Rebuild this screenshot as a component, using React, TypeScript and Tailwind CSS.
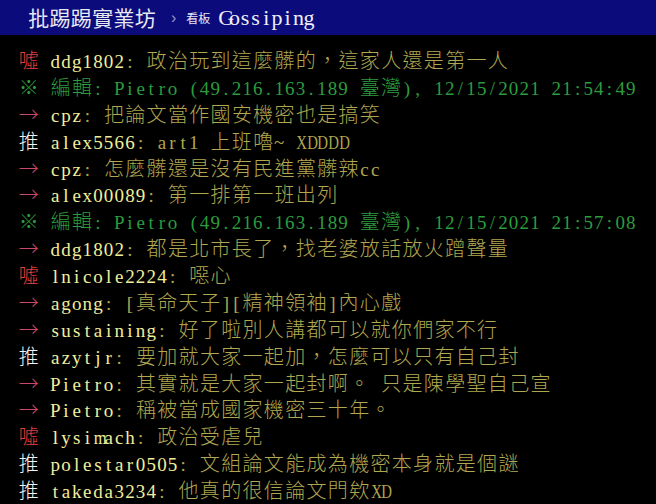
import React from 'react';

type Seg = { text: string; color: string };

const C = {
  boo: 'text-[#e0403f]',
  push: 'text-[#f2f2f2]',
  arrow: 'text-[#c8486a]',
  id: 'text-[#f0ee9c]',
  msg: 'text-[#b0a750]',
  edit: 'text-[#2c9c3e]',
};

const isWide = (ch: string) => ch.charCodeAt(0) >= 0x2000;

// the terminal font squeezes the wide latin letters into one cell
const squeeze = (ch: string) => {
  if (ch === 'm') return 'scale-x-[0.88]';
  if (ch === 'w') return 'scale-x-[0.85]';
  if (ch === 'D' || ch === 'X') return 'scale-x-[0.78]';
  return '';
};

// one terminal cell per character: half width for ascii, full width for cjk
const Cells: React.FC<{ text: string; color: string; big?: boolean }> = ({ text, color, big }) => (
  <>
    {Array.from(text).map((ch, i) =>
      isWide(ch) ? (
        <span
          key={i}
          className={`inline-block w-[21.33px] text-center font-['Noto_Sans_CJK_TC',sans-serif] ${
            big ? 'text-[21px]' : 'text-[20px] font-light'
          } ${color}`}
        >
          {ch}
        </span>
      ) : (
        <span
          key={i}
          className={`inline-block w-[10.66px] text-center font-['Liberation_Serif',serif] ${
            big ? 'text-[22px]' : `text-[19px] ${squeeze(ch)}`
          } ${color}`}
        >
          {ch === ' ' ? '\u00a0' : ch}
        </span>
      )
    )}
  </>
);

const push = (tag: string, id: string, msg: string): Seg[] => {
  const tagColor = tag === '噓' ? C.boo : tag === '推' ? C.push : C.arrow;
  return [
    { text: tag + ' ', color: tagColor },
    { text: id, color: C.id },
    { text: ': ' + msg, color: C.msg },
  ];
};

const edit = (time: string): Seg[] => [
  { text: `※ 編輯: Pietro (49.216.163.189 臺灣), 12/15/2021 ${time}`, color: C.edit },
];

const rows: Seg[][] = [
  push('噓', 'ddg1802', '政治玩到這麼髒的，這家人還是第一人'),
  edit('21:54:49'),
  push('→', 'cpz', '把論文當作國安機密也是搞笑'),
  push('推', 'alex5566', 'art1 上班嚕~ XDDDD'),
  push('→', 'cpz', '怎麼髒還是沒有民進黨髒辣cc'),
  push('→', 'alex00089', '第一排第一班出列'),
  edit('21:57:08'),
  push('→', 'ddg1802', '都是北市長了，找老婆放話放火蹭聲量'),
  push('噓', 'lnicole2224', '噁心'),
  push('→', 'agong', '[真命天子][精神領袖]內心戲'),
  push('→', 'sustaining', '好了啦別人講都可以就你們家不行'),
  push('推', 'azytjr', '要加就大家一起加，怎麼可以只有自己封'),
  push('→', 'Pietro', '其實就是大家一起封啊。 只是陳學聖自己宣'),
  push('→', 'Pietro', '稱被當成國家機密三十年。'),
  push('噓', 'lysimach', '政治受虐兒'),
  push('推', 'polestar0505', '文組論文能成為機密本身就是個謎'),
  push('推', 'takeda3234', '他真的很信論文門欸XD'),
];

export default function App() {
  return (
    <div className="w-[656px] h-[504px] overflow-hidden bg-black">
      <header className="flex h-[35px] items-center bg-[#0b0b7c] pl-[28px] leading-none">
        <Cells text="批踢踢實業坊" color="text-[#e8e8f0]" big />
        <span className="ml-[15px] mr-[10px] font-['Liberation_Sans',sans-serif] text-[16px] text-[#9a9ac4]">›</span>
        <span className="mr-[8px] font-['Noto_Sans_CJK_TC',sans-serif] text-[12px] text-[#e8e8f0]">看板</span>
        <Cells text="Gossiping" color="text-[#eeeef6]" big />
      </header>
      <div className="pl-[18px] pt-[12px]">
        {rows.map((segs, i) => (
          <div key={i} className="h-[26.875px] whitespace-nowrap leading-[26.875px]">
            {segs.map((s, j) => (
              <Cells key={j} text={s.text} color={s.color} />
            ))}
          </div>
        ))}
      </div>
    </div>
  );
}
